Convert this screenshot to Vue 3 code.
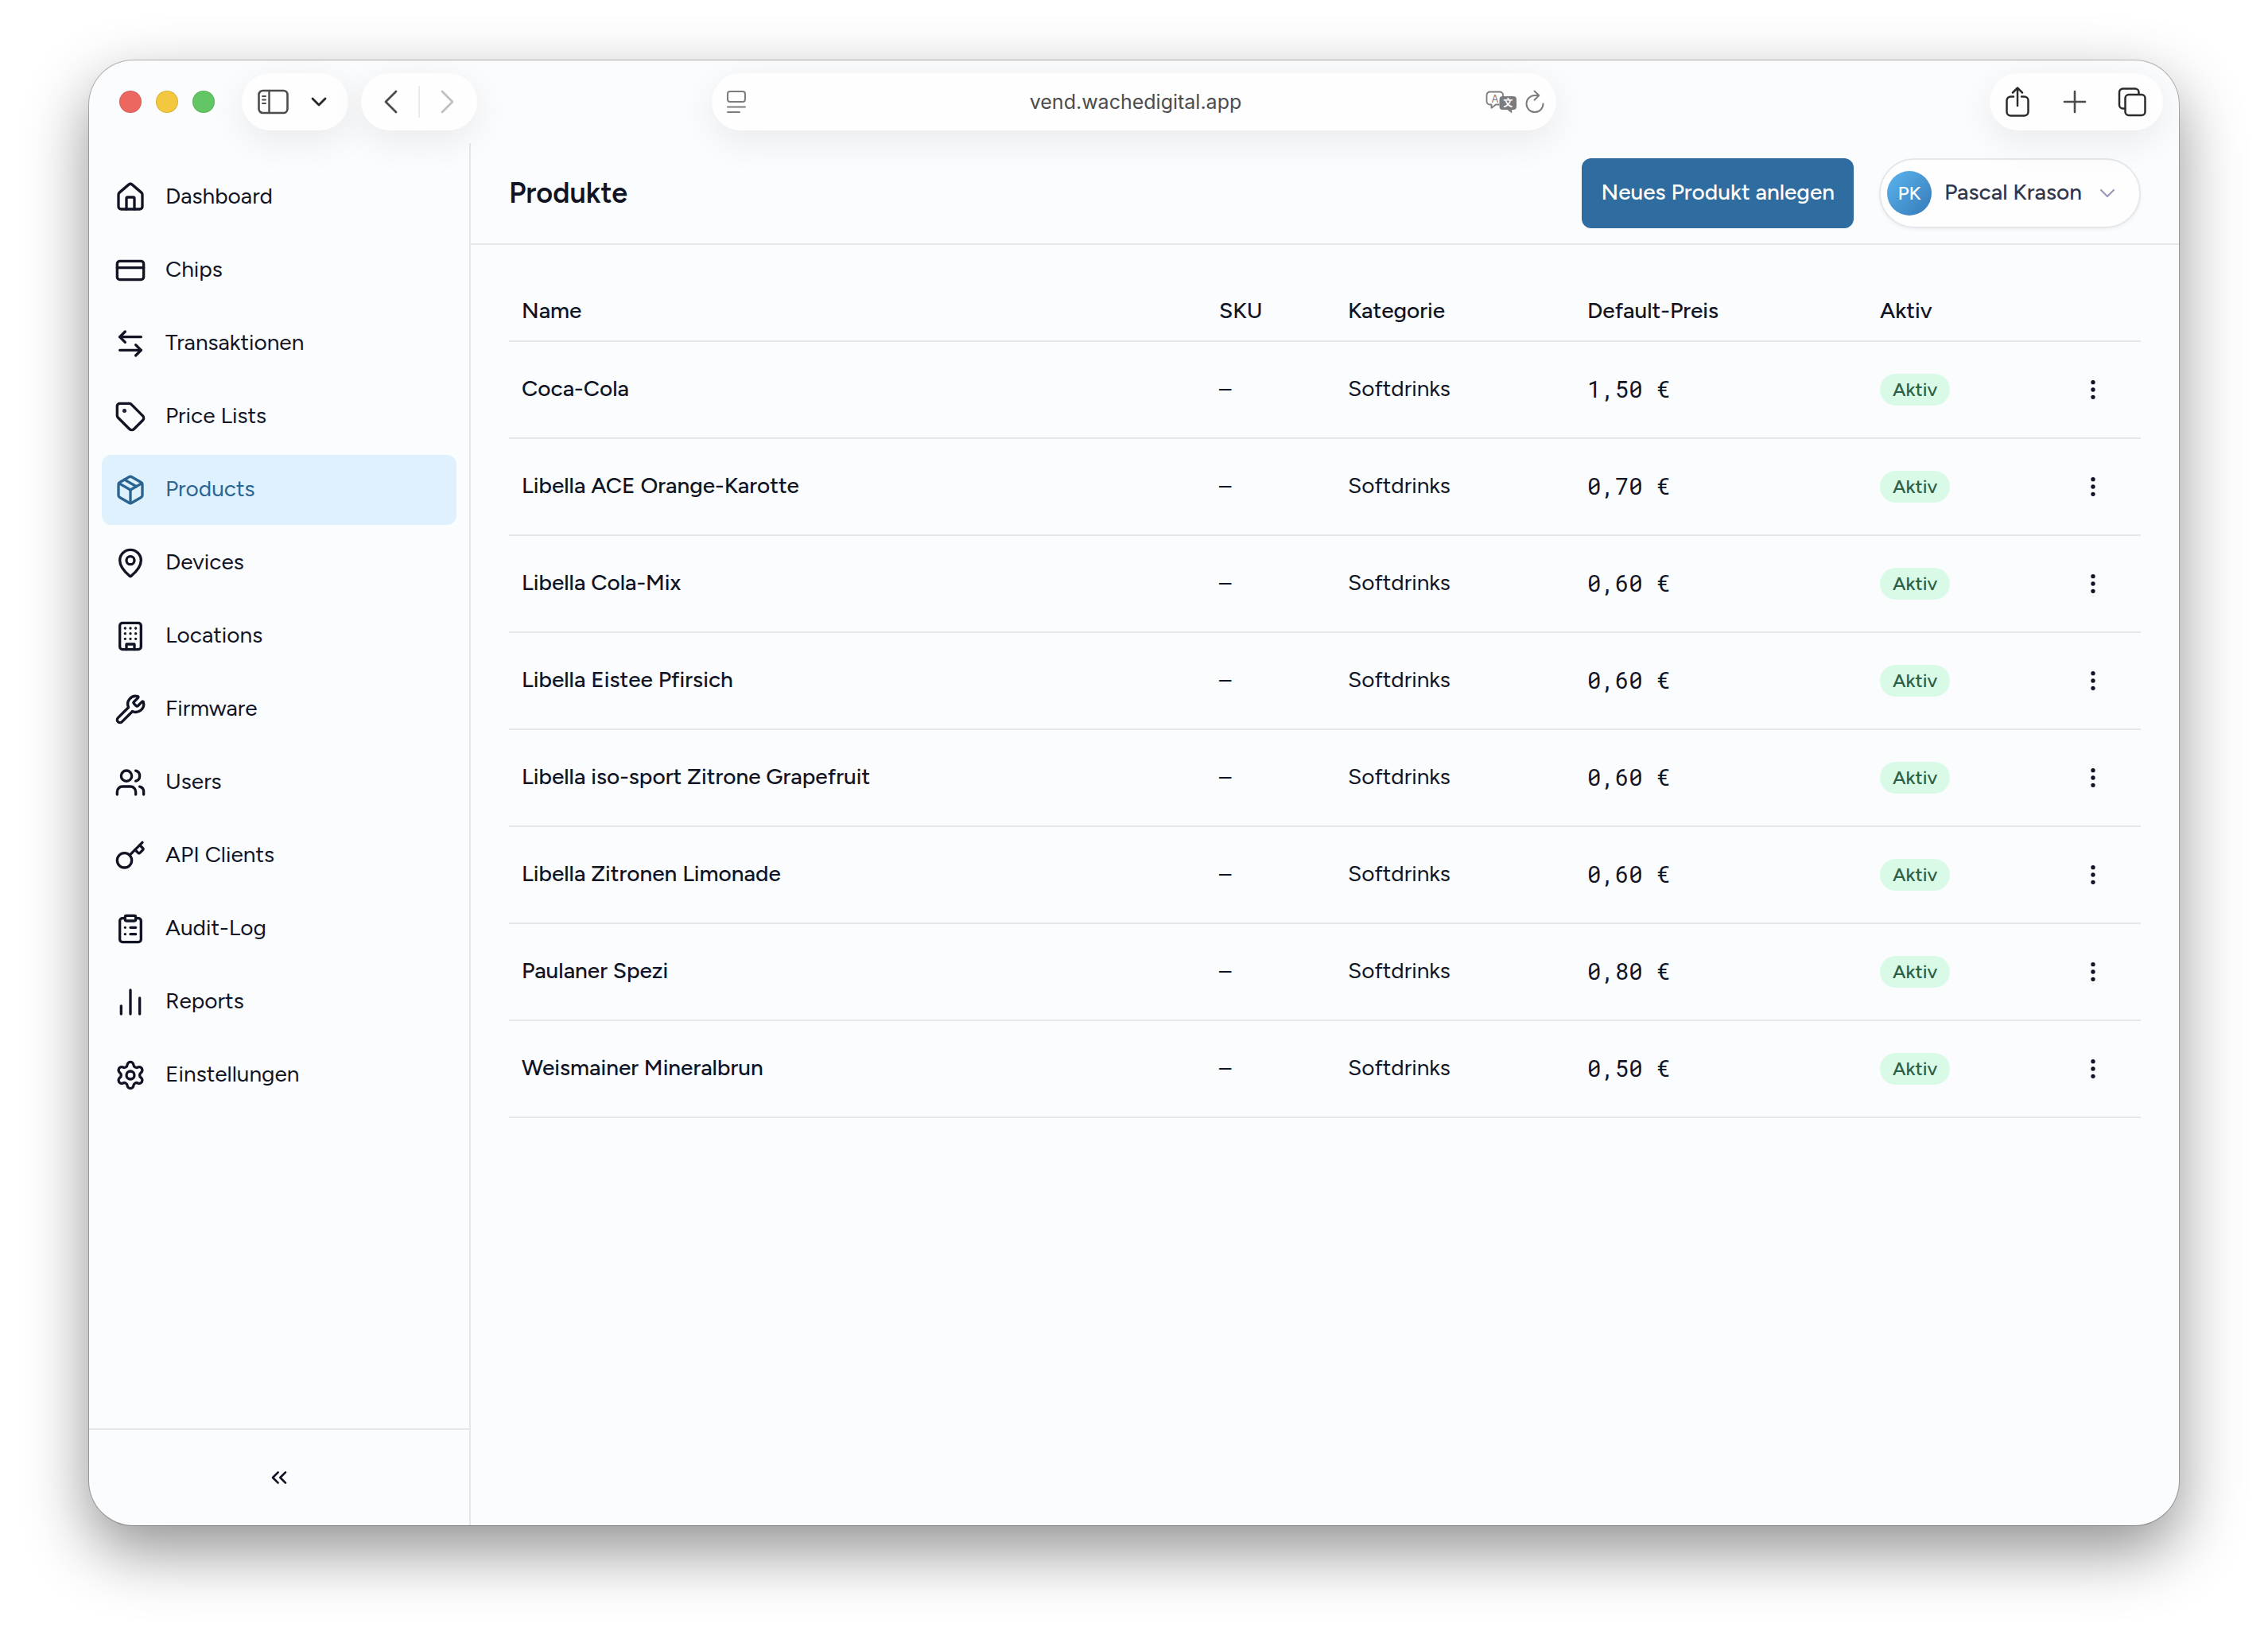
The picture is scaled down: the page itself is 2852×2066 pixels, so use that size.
<script setup>
    import {ref} from 'vue'

    //Sidebar entries, icon holds the inner svg markup (24x24 grid)
    const navItems = [
        {id: 'dashboard', label: 'Dashboard', icon: '<path d="M15 21v-8a1 1 0 0 0-1-1h-4a1 1 0 0 0-1 1v8"/><path d="M3 10a2 2 0 0 1 .709-1.528l7-5.999a2 2 0 0 1 2.582 0l7 5.999A2 2 0 0 1 21 10v9a2 2 0 0 1-2 2H5a2 2 0 0 1-2-2z"/>'},
        {id: 'chips', label: 'Chips', icon: '<rect width="20" height="14" x="2" y="5" rx="2"/><path d="M2 10h20"/>'},
        {id: 'transactions', label: 'Transaktionen', icon: '<path d="M8 3 4 7l4 4"/><path d="M4 7h16"/><path d="m16 21 4-4-4-4"/><path d="M20 17H4"/>'},
        {id: 'prices', label: 'Price Lists', icon: '<path d="M12.586 2.586A2 2 0 0 0 11.172 2H4a2 2 0 0 0-2 2v7.172a2 2 0 0 0 .586 1.414l8.704 8.704a2.426 2.426 0 0 0 3.42 0l6.58-6.58a2.426 2.426 0 0 0 0-3.42z"/><circle cx="7.5" cy="7.5" r=".5" fill="currentColor"/>'},
        {id: 'products', label: 'Products', icon: '<path d="M11 21.73a2 2 0 0 0 2 0l7-4A2 2 0 0 0 21 16V8a2 2 0 0 0-1-1.73l-7-4a2 2 0 0 0-2 0l-7 4A2 2 0 0 0 3 8v8a2 2 0 0 0 1 1.73z"/><path d="M12 22V12"/><path d="M3.29 7 12 12l8.71-5"/><path d="m7.5 4.27 9 5.15"/>'},
        {id: 'devices', label: 'Devices', icon: '<path d="M20 10c0 4.993-5.539 10.193-7.399 11.799a1 1 0 0 1-1.202 0C9.539 20.193 4 14.993 4 10a8 8 0 0 1 16 0"/><circle cx="12" cy="10" r="3"/>'},
        {id: 'locations', label: 'Locations', icon: '<rect width="16" height="20" x="4" y="2" rx="2"/><path d="M9 22v-4h6v4"/><path d="M8 6h.01M12 6h.01M16 6h.01M8 10h.01M12 10h.01M16 10h.01M8 14h.01M12 14h.01M16 14h.01"/>'},
        {id: 'firmware', label: 'Firmware', icon: '<path d="M14.7 6.3a1 1 0 0 0 0 1.4l1.6 1.6a1 1 0 0 0 1.4 0l3.106-3.105c.32-.322.863-.22.983.218a6 6 0 0 1-8.259 7.057l-7.91 7.91a1 1 0 0 1-2.999-3l7.91-7.91a6 6 0 0 1 7.057-8.259c.438.12.54.662.219.984z"/>'},
        {id: 'users', label: 'Users', icon: '<path d="M16 21v-2a4 4 0 0 0-4-4H6a4 4 0 0 0-4 4v2"/><path d="M16 3.128a4 4 0 0 1 0 7.744"/><path d="M22 21v-2a4 4 0 0 0-3-3.87"/><circle cx="9" cy="7" r="4"/>'},
        {id: 'api', label: 'API Clients', icon: '<path d="m15.5 7.5 2.3 2.3a1 1 0 0 0 1.4 0l2.1-2.1a1 1 0 0 0 0-1.4L19 4"/><path d="m21 2-9.6 9.6"/><circle cx="7.5" cy="15.5" r="5.5"/>'},
        {id: 'audit', label: 'Audit-Log', icon: '<rect width="8" height="4" x="8" y="2" rx="1"/><path d="M16 4h2a2 2 0 0 1 2 2v14a2 2 0 0 1-2 2H6a2 2 0 0 1-2-2V6a2 2 0 0 1 2-2h2"/><path d="M12 11h4M12 16h4M8 11h.01M8 16h.01"/>'},
        {id: 'reports', label: 'Reports', icon: '<path d="M5 21v-6"/><path d="M12 21V3"/><path d="M19 21V9"/>'},
        {id: 'settings', label: 'Einstellungen', icon: '<path d="M9.671 4.136a2.34 2.34 0 0 1 4.659 0 2.34 2.34 0 0 0 3.319 1.915 2.34 2.34 0 0 1 2.33 4.033 2.34 2.34 0 0 0 0 3.831 2.34 2.34 0 0 1-2.33 4.033 2.34 2.34 0 0 0-3.319 1.915 2.34 2.34 0 0 1-4.659 0 2.34 2.34 0 0 0-3.32-1.915 2.34 2.34 0 0 1-2.33-4.033 2.34 2.34 0 0 0 0-3.831A2.34 2.34 0 0 1 6.35 6.051a2.34 2.34 0 0 0 3.319-1.915"/><circle cx="12" cy="12" r="3"/>'},
    ]
    const active = ref('products')

    const products = [
        {name: 'Coca-Cola', category: 'Softdrinks', price: 1.5},
        {name: 'Libella ACE Orange-Karotte', category: 'Softdrinks', price: 0.7},
        {name: 'Libella Cola-Mix', category: 'Softdrinks', price: 0.6},
        {name: 'Libella Eistee Pfirsich', category: 'Softdrinks', price: 0.6},
        {name: 'Libella iso-sport Zitrone Grapefruit', category: 'Softdrinks', price: 0.6},
        {name: 'Libella Zitronen Limonade', category: 'Softdrinks', price: 0.6},
        {name: 'Paulaner Spezi', category: 'Softdrinks', price: 0.8},
        {name: 'Weismainer Mineralbrun', category: 'Softdrinks', price: 0.5},
    ]

    function formatPrice(value) {
        return value.toFixed(2).replace('.', ',') + ' €'
    }
</script>

<template>
    <div class="desktop">
        <div class="window">
            <header class="titlebar">
                <div class="titlebar-left">
                    <div class="lights">
                        <span class="light red"></span>
                        <span class="light yellow"></span>
                        <span class="light green"></span>
                    </div>
                    <div class="pill sidebar-pill">
                        <button class="tool" aria-label="Sidebar">
                            <svg width="40" height="32" viewBox="0 0 40 32" fill="none" stroke="#4b4b4d" stroke-linecap="round">
                                <rect x="1.5" y="2" width="36" height="28" rx="5" stroke-width="2.6"/>
                                <path d="M14.5 2v28" stroke-width="2.4"/>
                                <path d="M6 9h4M6 13.5h4M6 18h4" stroke-width="1.8"/>
                            </svg>
                        </button>
                        <button class="tool" aria-label="Tab groups">
                            <svg width="20" height="12" viewBox="0 0 20 12" fill="none" stroke="#262628" stroke-width="2.8" stroke-linecap="round" stroke-linejoin="round">
                                <path d="m2 2 8 8 8-8"/>
                            </svg>
                        </button>
                    </div>
                    <div class="pill history-pill">
                        <button class="tool" aria-label="Back">
                            <svg width="18" height="30" viewBox="0 0 18 30" fill="none" stroke="#4b4b4d" stroke-width="2.8" stroke-linecap="round" stroke-linejoin="round">
                                <path d="M16 2 3 15l13 13"/>
                            </svg>
                        </button>
                        <span class="split"></span>
                        <button class="tool" aria-label="Forward">
                            <svg width="18" height="30" viewBox="0 0 18 30" fill="none" stroke="#bfbfc1" stroke-width="2.8" stroke-linecap="round" stroke-linejoin="round">
                                <path d="m2 2 13 13L2 28"/>
                            </svg>
                        </button>
                    </div>
                </div>

                <div class="pill address">
                    <button class="tool" aria-label="Page menu">
                        <svg width="24" height="30" viewBox="0 0 24 30" fill="none" stroke="#7c7c7e" stroke-width="2" stroke-linecap="round">
                            <rect x="1" y="2" width="22" height="13" rx="3"/>
                            <path d="M1 21.5h22M1 28h15"/>
                        </svg>
                    </button>
                    <span class="url">vend.wachedigital.app</span>
                    <div class="address-tools">
                        <button class="tool" aria-label="Translate">
                            <svg width="40" height="30" viewBox="0 0 40 30">
                                <path d="M17.500 18.500H13l-5.500 4.300v-4.300H5.500A4 4 0 0 1 1.500 14.500V6.500A4 4 0 0 1 5.500 2.500H18a4 4 0 0 1 4 4v1.500" fill="none" stroke="#7c7c7e" stroke-width="1.8" stroke-linejoin="round"/>
                                <text x="12" y="15.5" text-anchor="middle" font-family="Inter, sans-serif" font-size="13" fill="#7c7c7e">A</text>
                                <path d="M21.500 8H35a4 4 0 0 1 4 4v9a4 4 0 0 1-4 4h-1.800v4.500L27.500 25h-6a4 4 0 0 1-4-4v-9a4 4 0 0 1 4-4z" fill="#7c7c7e"/>
                                <text x="28.2" y="21" text-anchor="middle" font-family="'Noto Sans CJK SC', sans-serif" font-weight="700" font-size="12" fill="#fff">文</text>
                            </svg>
                        </button>
                        <button class="tool" aria-label="Reload">
                            <svg width="24" height="30" viewBox="0 0 24 30" fill="none" stroke="#7c7c7e" stroke-width="2" stroke-linecap="round" stroke-linejoin="round">
                                <path d="M22.500 17.500a10.500 10.500 0 1 1-10.500-10.500h5"/>
                                <path d="m11.500 1.500 5.800 5.500-5.800 5.800"/>
                            </svg>
                        </button>
                    </div>
                </div>

                <div class="titlebar-right">
                    <div class="pill action-pill">
                        <button class="tool" aria-label="Share">
                            <svg width="36" height="40" viewBox="0 0 36 40" fill="none" stroke="#2b2b2d" stroke-width="2.5" stroke-linecap="round" stroke-linejoin="round">
                                <path d="M13 13.500H9.500a5 5 0 0 0-5 5v14a5 5 0 0 0 5 5h17a5 5 0 0 0 5-5v-14a5 5 0 0 0-5-5H23"/>
                                <path d="M18 25V3M12 8.500 18 2.500l6 6"/>
                            </svg>
                        </button>
                        <button class="tool" aria-label="New tab">
                            <svg width="36" height="40" viewBox="0 0 36 40" fill="none" stroke="#4b4b4d" stroke-width="2.6" stroke-linecap="round">
                                <path d="M18 7v26M5 20h26"/>
                            </svg>
                        </button>
                        <button class="tool" aria-label="Tab overview">
                            <svg width="36" height="40" viewBox="0 0 36 40" fill="none" stroke="#2b2b2d" stroke-width="2.5" stroke-linecap="round" stroke-linejoin="round">
                                <rect x="9.5" y="11" width="25" height="26" rx="4.5"/>
                                <path d="M9 28.500H6.500a4.500 4.500 0 0 1-4.500-4.500V8a4.500 4.500 0 0 1 4.500-4.500H22A4.500 4.500 0 0 1 26.500 8v2.500"/>
                            </svg>
                        </button>
                    </div>
                </div>
            </header>

            <div class="app">
                <aside class="sidebar">
                    <nav class="nav">
                        <a
                            v-for="item in navItems"
                            :key="item.id"
                            href="#"
                            class="nav-item"
                            :class="{active: item.id === active}"
                            @click.prevent="active = item.id"
                        >
                            <svg class="icon" viewBox="0 0 24 24" v-html="item.icon"></svg>
                            <span class="label">{{ item.label }}</span>
                        </a>
                    </nav>
                    <div class="sidebar-footer">
                        <button class="collapse" aria-label="Collapse">
                            <svg class="icon small" viewBox="0 0 24 24"><path d="m11 17-5-5 5-5"/><path d="m18 17-5-5 5-5"/></svg>
                        </button>
                    </div>
                </aside>

                <main class="main">
                    <div class="page-header">
                        <h1>Produkte</h1>
                        <button class="primary"><span class="label">Neues Produkt anlegen</span></button>
                        <button class="user">
                            <span class="avatar">PK</span>
                            <span class="label">Pascal Krason</span>
                            <svg width="20" height="12" viewBox="0 0 20 12" fill="none" stroke="#9a9ab4" stroke-width="2.2" stroke-linecap="round" stroke-linejoin="round">
                                <path d="m2 2 8 8 8-8"/>
                            </svg>
                        </button>
                    </div>

                    <div class="content">
                        <table>
                            <colgroup>
                                <col />
                                <col class="col-sku" />
                                <col class="col-category" />
                                <col class="col-price" />
                                <col class="col-active" />
                                <col class="col-menu" />
                            </colgroup>
                            <thead>
                                <tr>
                                    <th><span class="label">Name</span></th>
                                    <th><span class="label">SKU</span></th>
                                    <th><span class="label">Kategorie</span></th>
                                    <th><span class="label">Default-Preis</span></th>
                                    <th><span class="label">Aktiv</span></th>
                                    <th></th>
                                </tr>
                            </thead>
                            <tbody>
                                <tr v-for="p in products" :key="p.name">
                                    <td class="name"><span class="label">{{ p.name }}</span></td>
                                    <td><span class="label">–</span></td>
                                    <td><span class="label">{{ p.category }}</span></td>
                                    <td class="price">{{ formatPrice(p.price) }}</td>
                                    <td><span class="badge">Aktiv</span></td>
                                    <td>
                                        <button class="row-menu" :aria-label="p.name">
                                            <svg class="icon small" viewBox="0 0 24 24"><circle cx="12" cy="12" r="1"/><circle cx="12" cy="5" r="1"/><circle cx="12" cy="19" r="1"/></svg>
                                        </button>
                                    </td>
                                </tr>
                            </tbody>
                        </table>
                    </div>
                </main>
            </div>
        </div>
    </div>
</template>

<style>
body {
    margin: 0;
    background: #fff;
}
</style>

<style scoped>
.desktop {
    box-sizing: border-box;
    min-height: 100vh;
    padding: 76px 112px 148px;
    display: flex;
    font-family: Figtree, Lato, sans-serif;
    font-size: 28px;
    line-height: 42px;
    color: #111424;
}

.desktop * {
    box-sizing: border-box;
}

button {
    border: 0;
    padding: 0;
    background: none;
    font: inherit;
    color: inherit;
    cursor: pointer;
}

svg {
    display: block;
    flex-shrink: 0;
}

/* optical centering, the font sits low in its line box */
.label {
    display: block;
    padding-bottom: 4px;
}

.window {
    flex: 1;
    min-width: 0;
    display: flex;
    flex-direction: column;
    background: #fafcfe;
    border-radius: 56px;
    overflow: hidden;
    box-shadow: 0 0 0 1px rgba(0, 0, 0, 0.25), 0 32px 80px rgba(0, 0, 0, 0.43);
}

/* browser toolbar */
.titlebar {
    position: relative;
    z-index: 1;
    height: 104px;
    display: grid;
    grid-template-columns: 1fr minmax(0, 1062px) 1fr;
    align-items: center;
}

.titlebar-left {
    display: flex;
    align-items: center;
    gap: 16px;
    padding-left: 38px;
}

.titlebar-right {
    display: flex;
    justify-content: flex-end;
    padding-right: 20px;
}

.lights {
    display: flex;
    gap: 18px;
    margin-right: 18px;
}

.light {
    width: 28px;
    height: 28px;
    border-radius: 50%;
    border: 1px solid rgba(0, 0, 0, 0.1);
}

.red { background: #ec6760; }
.yellow { background: #f3c73e; }
.green { background: #62c664; }

.pill {
    height: 72px;
    display: flex;
    align-items: center;
    border-radius: 36px;
    background: #fefefe;
    box-shadow: 0 12px 48px rgba(0, 0, 0, 0.08);
}

.sidebar-pill {
    gap: 27px;
    padding: 0 27px 0 20px;
}

.history-pill {
    gap: 26px;
    padding: 0 28px;
}

.split {
    width: 2px;
    height: 40px;
    background: #ececee;
}

.address {
    display: grid;
    grid-template-columns: 1fr auto 1fr;
    padding: 0 15px 0 19px;
}

.url {
    font-family: Inter, sans-serif;
    font-size: 25px;
    color: #4c4c4e;
}

.address-tools {
    display: flex;
    justify-content: flex-end;
    gap: 10px;
}

.address .tool {
    justify-self: start;
}

.action-pill {
    gap: 36px;
    padding: 0 21px 0 17px;
}

/* app */
.app {
    flex: 1;
    display: flex;
}

.sidebar {
    width: 480px;
    flex-shrink: 0;
    display: flex;
    flex-direction: column;
    border-right: 2px solid #e5e8eb;
}

.nav {
    flex: 1;
    display: flex;
    flex-direction: column;
    gap: 4px;
    padding: 24px 16px;
}

.nav-item {
    height: 88px;
    display: flex;
    align-items: center;
    gap: 24px;
    padding: 0 16px;
    border-radius: 12px;
    color: inherit;
    text-decoration: none;
}

.nav-item.active {
    background: #def1fc;
    color: #2b6391;
}

.icon {
    width: 40px;
    height: 40px;
    fill: none;
    stroke: currentColor;
    stroke-width: 2;
    stroke-linecap: round;
    stroke-linejoin: round;
}

.icon.small {
    width: 32px;
    height: 32px;
}

.sidebar-footer {
    border-top: 2px solid #e5e8eb;
    padding: 16px;
}

.collapse {
    width: 100%;
    height: 88px;
    display: flex;
    align-items: center;
    justify-content: center;
}

.main {
    flex: 1;
    min-width: 0;
}

.page-header {
    height: 128px;
    display: flex;
    align-items: center;
    gap: 32px;
    padding: 0 48px;
    border-bottom: 2px solid #e5e8eb;
}

h1 {
    flex: 1;
    margin: 0;
    font-size: 36px;
    font-weight: 600;
}

.primary {
    height: 88px;
    padding: 0 24px;
    border-radius: 12px;
    background: #2f6ca0;
    color: #fff;
    font-weight: 500;
}

.user {
    height: 88px;
    display: flex;
    align-items: center;
    gap: 16px;
    padding: 0 30px 0 8px;
    border: 2px solid #e5e8eb;
    border-radius: 44px;
    background: #fefeff;
    color: #33374c;
    font-weight: 500;
    box-shadow: 0 2px 4px rgba(0, 0, 0, 0.05);
}

.user svg {
    margin-left: 6px;
}

.avatar {
    width: 56px;
    height: 56px;
    display: flex;
    align-items: center;
    justify-content: center;
    border-radius: 50%;
    background: linear-gradient(135deg, #5bb5ee, #3579b8);
    color: #fff;
    font-size: 24px;
    font-weight: 500;
}

.content {
    padding: 48px;
}

table {
    width: 100%;
    table-layout: fixed;
    border-collapse: separate;
    border-spacing: 0;
}

.col-sku { width: 162px; }
.col-category { width: 301px; }
.col-price { width: 368px; }
.col-active { width: 224px; }
.col-menu { width: 120px; }

th,
td {
    padding: 0 16px;
    border-bottom: 2px solid #e5e8eb;
    text-align: left;
    vertical-align: middle;
}

th {
    height: 74px;
    font-weight: 500;
}

td {
    height: 122px;
}

.name {
    font-weight: 500;
}

.price {
    padding-bottom: 2px;
    font-family: "SF Mono", "Roboto Mono", "Liberation Mono", monospace;
    font-size: 29px;
}

.badge {
    display: block;
    width: fit-content;
    height: 40px;
    padding: 0 16px;
    border-radius: 20px;
    background: #d9fae6;
    color: #2c6049;
    font-size: 24px;
    line-height: 40px;
    font-weight: 500;
}

.row-menu {
    width: 88px;
    height: 88px;
    display: flex;
    align-items: center;
    justify-content: center;
}
</style>
